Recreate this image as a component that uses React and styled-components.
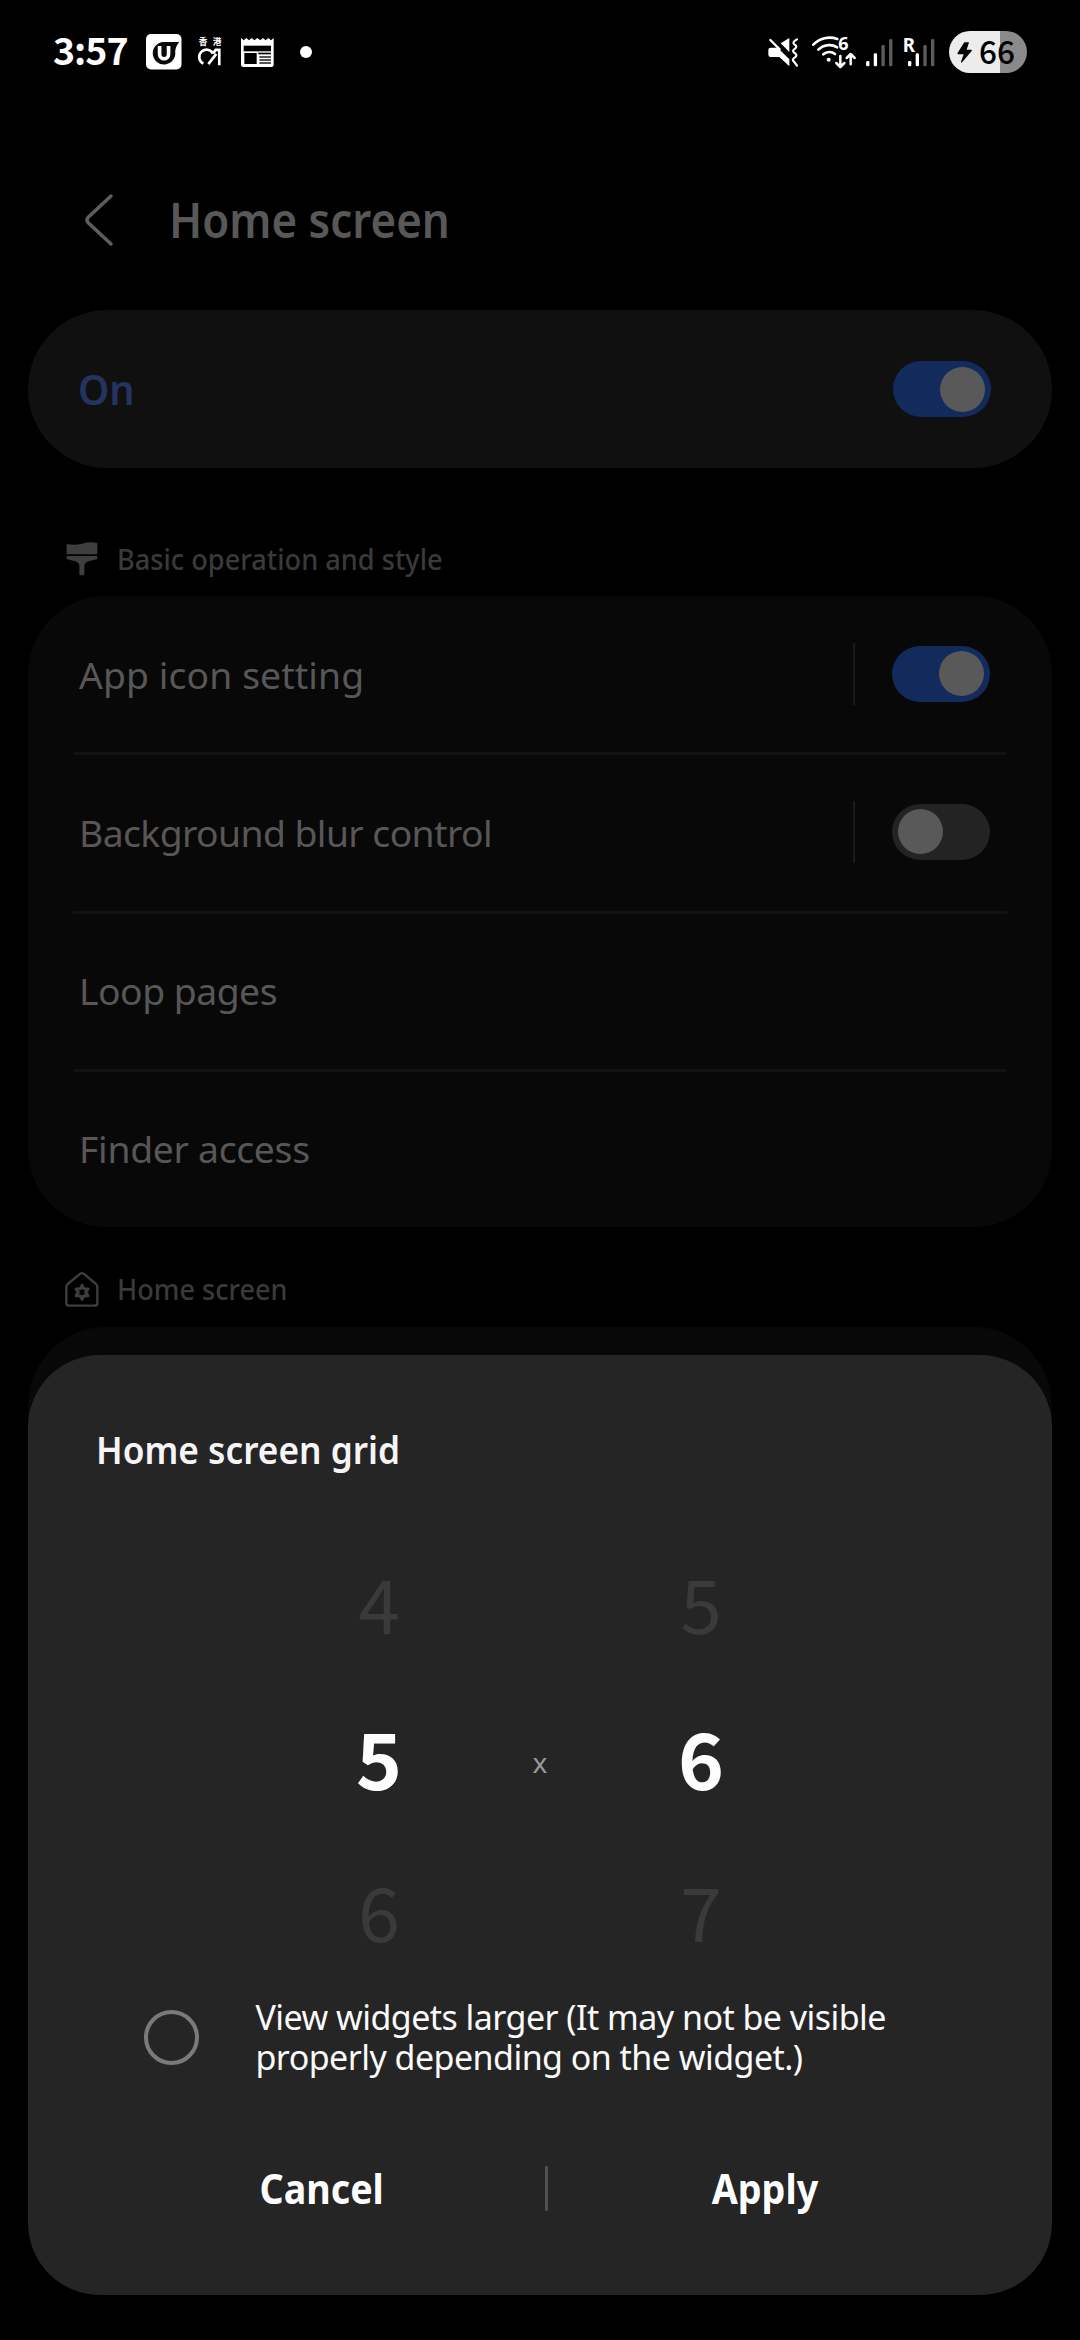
import React from "react";
import styled, { createGlobalStyle } from "styled-components";

const GlobalStyle = createGlobalStyle`
  *, *::before, *::after { box-sizing: border-box; }
  body { margin: 0; background: #000; font-family: "Noto Sans", Roboto, sans-serif; }
`;

const numerals = '"Noto Sans CJK SC", "Noto Sans", sans-serif';

/* ---------- page ---------- */

const Screen = styled.main`
  position: relative;
  display: flex;
  flex-direction: column;
  width: 1080px;
  height: 2340px;
  overflow: hidden;
  background: #000;
`;

/* Slightly condensed lettering, anchored on the side the text is aligned to. */
const Condensed = styled.span`
  display: inline-block;
  transform: scaleX(${(p) => p.$x});
  transform-origin: ${(p) => p.$from || "left"} center;
  white-space: nowrap;
`;

/* ---------- status bar ---------- */

const StatusBar = styled.header`
  display: flex;
  flex: none;
  justify-content: space-between;
  align-items: center;
  height: 104px;
  padding: 0 53px 0 53px;
`;

const StatusGroup = styled.div`
  display: flex;
  align-items: center;
`;

const Clock = styled.time`
  width: 92.5px;
  color: #fff;
  font-family: ${numerals};
  font-size: 37.5px;
  font-weight: 700;
  line-height: 56px;
  letter-spacing: -1px;
  padding-bottom: 6px;
`;

const Glyph = styled.svg`
  display: block;
  flex: none;
  overflow: visible;
  width: ${(p) => p.$w}px;
  height: ${(p) => p.$h}px;
  margin-right: ${(p) => p.$gap || 0}px;
`;

const MoreDot = styled.span`
  width: 12px;
  height: 12px;
  border-radius: 50%;
  background: #fff;
`;

const Battery = styled.div`
  display: flex;
  align-items: center;
  width: 78px;
  height: 42px;
  padding-left: 8px;
  gap: 7px;
  border-radius: 21px;
  color: #000;
  background: linear-gradient(to right, #ececec 51px, #8a8a8a 51px);
`;

const BatteryLevel = styled.span`
  padding-bottom: 4px;
  font-family: ${numerals};
  font-size: 31.5px;
  font-weight: 500;
  line-height: 38px;
`;

/* ---------- app bar ---------- */

const AppBar = styled.div`
  display: flex;
  flex: none;
  align-items: center;
  height: 206px;
  padding: 26px 0 0 85px;
`;

const PageTitle = styled.h1`
  margin: 0 0 0 55px;
  color: #585858;
  font-size: 48px;
  font-weight: 600;
  line-height: 70px;
`;

/* ---------- cards ---------- */

const MasterCard = styled.section`
  display: flex;
  flex: none;
  align-items: center;
  justify-content: space-between;
  height: 158px;
  margin: 0 28px;
  padding: 0 61px 0 50px;
  border-radius: 79px;
  background: #101010;
`;

const MasterLabel = styled.span`
  color: #24345f;
  font-size: 41px;
  font-weight: 600;
  line-height: 60px;
`;

const SectionLabel = styled.h2`
  display: flex;
  flex: none;
  align-items: center;
  height: ${(p) => p.$h}px;
  margin: 0;
  padding: ${(p) => p.$top}px 0 0 65px;
  color: #3a3a3a;
  font-size: 29px;
  font-weight: 500;
  line-height: 40px;
`;

const Card = styled.section`
  display: flex;
  flex: none;
  flex-direction: column;
  margin: 0 28px;
  padding-top: 1px;
  min-height: ${(p) => p.$min || 0}px;
  border-radius: 78px;
  background: #080808;
`;

const Row = styled.div`
  display: flex;
  align-items: center;
  justify-content: space-between;
  height: 155.25px;
  padding: 0 62px 0 51px;
`;

const RowLabel = styled.span`
  color: #575757;
  font-size: 37.3px;
  line-height: 54px;
  letter-spacing: ${(p) => p.$tracking}px;
`;

const RowRule = styled.hr`
  flex: none;
  height: 3px;
  margin: 0 45px;
  border: 0;
  background: #121212;
`;

const RowControl = styled.div`
  display: flex;
  align-items: center;
  gap: 37.5px;
  padding-bottom: 2px;
`;

const ControlRule = styled.span`
  width: 2px;
  height: 62px;
  background: #191919;
`;

const Switch = styled.span`
  display: flex;
  align-items: center;
  justify-content: ${(p) => (p.$on ? "flex-end" : "flex-start")};
  width: 98px;
  height: 56px;
  padding: 0 6px;
  border-radius: 28px;
  background: ${(p) => (p.$on ? "#132b5c" : "#232323")};
`;

const Knob = styled.span`
  width: 45px;
  height: 45px;
  border-radius: 50%;
  background: #595959;
`;

/* ---------- dialog ---------- */

const Dialog = styled.div`
  position: absolute;
  left: 28px;
  right: 28px;
  bottom: 45px;
  display: flex;
  flex-direction: column;
  height: 940px;
  padding-top: 66px;
  border-radius: 72px;
  background: #252525;
`;

const DialogTitle = styled.h2`
  margin: 0 0 51px 67.5px;
  color: #f5f5f7;
  font-size: 38.5px;
  font-weight: 600;
  line-height: 56px;
`;

const Picker = styled.div`
  display: grid;
  grid-template-columns: repeat(3, 161px);
  grid-auto-rows: 154px;
  justify-content: center;
  align-items: center;
  justify-items: center;
`;

const PickerValue = styled.span`
  padding-bottom: 6px;
  color: ${(p) => (p.$selected ? "#fdfdfd" : "#3a3a3a")};
  font-family: ${numerals};
  font-size: ${(p) => (p.$selected ? 78 : 75)}px;
  font-weight: ${(p) => (p.$selected ? 700 : 400)};
  line-height: 110px;
`;

const Times = styled.span`
  padding-top: 6px;
  color: #999;
  font-size: 28px;
  line-height: 40px;
`;

const Option = styled.label`
  display: flex;
  align-items: center;
  height: 80px;
  margin-top: 7px;
  padding-left: 115.5px;
`;

const Radio = styled.span`
  width: 55px;
  height: 55px;
  margin-right: 57px;
  border: 4px solid #7a7a7a;
  border-radius: 50%;
`;

const OptionText = styled.span`
  color: #fafafa;
  font-size: 34px;
  line-height: 40px;
  letter-spacing: -0.54px;
  white-space: nowrap;
`;

const Actions = styled.div`
  display: grid;
  grid-template-columns: 447px 3px 1fr;
  align-items: center;
  height: 60px;
  margin: 81px 70px 0;
`;

const Action = styled.button`
  padding: 0;
  border: 0;
  background: none;
  color: #fdfdfd;
  font-family: inherit;
  font-size: 41px;
  font-weight: 700;
  line-height: 60px;
`;

const ActionRule = styled.span`
  height: 45px;
  border-radius: 1px;
  background: #505050;
`;

/* ---------- drawings ---------- */

const UIcon = () => (
  <Glyph $w={35.5} $h={35.5} $gap={17} viewBox="347 73 107 107">
    <rect x="347" y="73" width="107" height="107" rx="15" fill="#fff" />
    <path d="M400 97 H447 C439 108 436 114 435 126 A34 34 0 1 1 400 97Z" fill="#0a0a0a" />
    <path d="M388 109 V134 A13.500 13.500 0 0 0 415 134 V109" fill="none" stroke="#fff" strokeWidth="11" />
  </Glyph>
);

const HkIcon = () => (
  <Glyph $w={24} $h={27.5} $gap={19} viewBox="505 86 72 83">
    <text x="507" y="108" fill="#fff" fontSize="26" fontWeight="700" fontFamily='"Noto Sans CJK TC", sans-serif'>香</text>
    <text x="549" y="108" fill="#fff" fontSize="26" fontWeight="700" fontFamily='"Noto Sans CJK TC", sans-serif'>港</text>
    <g fill="none" stroke="#fff" strokeWidth="8">
      <path d="M521 163 A22 22 0 1 1 550 133" />
      <path d="M536 165 L560 134" />
      <path d="M550 133 L558 122 H569 V168" />
    </g>
  </Glyph>
);

const NewsIcon = () => (
  <Glyph $w={32.7} $h={29} $gap={26} viewBox="633 83 98 87">
    <path d="M633 83 L641 90 L649 83 L657 90 L665 83 L673 90 L682 83 L691 90 L699 83 L707 90 L715 83 L723 90 L731 83 V163 Q731 170 724 170 H640 Q633 170 633 163Z" fill="#fff" />
    <g fill="#000">
      <rect x="641" y="106" width="82" height="17" />
      <rect x="643" y="128" width="37" height="33" />
      <rect x="685" y="127" width="38" height="5" />
      <rect x="688" y="138" width="35" height="4" />
      <rect x="688" y="147" width="35" height="4" />
      <rect x="688" y="156" width="35" height="4" />
    </g>
  </Glyph>
);

const MuteIcon = () => (
  <Glyph $w={30} $h={29} $gap={14} viewBox="83 82 90 87">
    <path d="M91 111 H112 L147 146 V167 L117 139 H91 Q84 139 84 132 V118 Q84 111 91 111Z" fill="#fff" />
    <path d="M90 88 L118 116" stroke="#fff" strokeWidth="7" strokeLinecap="round" />
    <path d="M121 98 L147 82 V124Z" fill="#fff" />
    <path d="M170 86 Q154 95 162 101 Q173 107 164 114 Q153 121 163 127 Q173 133 164 140 Q152 147 162 154 L170 165" fill="none" stroke="#fff" strokeWidth="6.500" strokeLinecap="round" />
  </Glyph>
);

const WifiIcon = () => (
  <Glyph $w={44} $h={31} $gap={10} viewBox="218 81 132 93">
    <g fill="none" stroke="#fff" strokeWidth="8" strokeLinecap="round">
      <path d="M222 104 A68 68 0 0 1 294 87" />
      <path d="M237 119 A47 47 0 0 1 294 112" />
      <path d="M252 133 A27 27 0 0 1 287 132" />
    </g>
    <circle cx="268" cy="149" r="6" fill="#fff" />
    <text x="297" y="121" fontSize="54" fontWeight="700" fontFamily='"Noto Sans", sans-serif' fill="#fff" stroke="#000" strokeWidth="6" paintOrder="stroke">6</text>
    <g fill="none" stroke="#fff" strokeWidth="7.500" strokeLinecap="round" strokeLinejoin="round">
      <path d="M303 138 V170 M291 159 L303 171 L315 159" />
      <path d="M334 163 V132 M322 144 L334 132 L346 144" />
    </g>
  </Glyph>
);

const bars = [
  [0, 66, 16, "#fff"],
  [23, 43, 39, "#fff"],
  [46, 18, 64, "#5c5c5c"],
  [69, 0, 82, "#5c5c5c"],
];

const SignalIcon = ({ roaming }) => (
  <Glyph $w={roaming ? 30 : 26.500} $h={29} $gap={roaming ? 15 : 11.500} viewBox={roaming ? "-12 -3 90 87" : "0 -3 79 87"}>
    {bars.map(([x, y, h, fill]) => (
      <rect key={x} x={x} y={y} width="10" height={h} rx="4" fill={fill} />
    ))}
    {roaming && (
      <text x="-16" y="38" fontSize="56" fontWeight="700" fontFamily='"Noto Sans", sans-serif' fill="#fff" stroke="#000" strokeWidth="5" paintOrder="stroke">R</text>
    )}
  </Glyph>
);

const BoltIcon = () => (
  <Glyph $w={15} $h={21} viewBox="651 95 45 63">
    <path d="M673 96 H687 L680 118 H694 Q697 119 695 122 L667 155 Q662 159 663 154 L671 132 H655 Q651 131 653 127Z" fill="#000" />
  </Glyph>
);

const BackIcon = () => (
  <Glyph $w={29} $h={52} viewBox="0 0 29 52">
    <path d="M26 2 L3 23.500 Q1 26 3 28.500 L26 50" fill="none" stroke="#5e5e5e" strokeWidth="3.5" strokeLinecap="round" />
  </Glyph>
);

const BrushIcon = () => (
  <Glyph $w={34} $h={34} $gap={18} viewBox="134 65 102 102">
    <g fill="#3e3e3e">
      <path d="M139 71 Q162 76 185 70 Q208 63 231 68 V102 H139Z" />
      <path d="M139 107 H231 V116 Q222 119 208 122 Q193 126 192 135 V160 Q192 165 187 165 H182 Q177 165 177 160 V135 Q176 126 162 122 Q148 119 139 116Z" />
    </g>
  </Glyph>
);

const HomeIcon = () => (
  <Glyph $w={34} $h={35} $gap={18} viewBox="134 91 102 105">
    <g fill="none" stroke="#3e3e3e" strokeWidth="7" strokeLinejoin="round">
      <path d="M180 96 Q185 93 190 96 L227 127 Q231 131 231 136 V183 Q231 192 222 192 H147 Q138 192 138 183 V136 Q138 131 142 127Z" />
      <path d="M185 131 L190 141 L203 142 L196 152 L203 162 L190 163 L185 173 L180 163 L167 162 L174 152 L167 142 L180 141Z" strokeWidth="9" />
    </g>
  </Glyph>
);

/* ---------- data ---------- */

const rows = [
  { label: "App icon setting", tracking: 0.1, toggle: "on" },
  { label: "Background blur control", tracking: -0.58, toggle: "off" },
  { label: "Loop pages", tracking: -0.5 },
  { label: "Finder access", tracking: -0.3 },
];

const grid = [
  [4, 5],
  [5, 6],
  [6, 7],
];

const Toggle = ({ on }) => (
  <Switch $on={on}>
    <Knob />
  </Switch>
);

export default function App() {
  return (
    <Screen>
      <GlobalStyle />
      <StatusBar>
        <StatusGroup>
          <Clock>3:57</Clock>
          <UIcon />
          <HkIcon />
          <NewsIcon />
          <MoreDot />
        </StatusGroup>
        <StatusGroup>
          <MuteIcon />
          <WifiIcon />
          <SignalIcon />
          <SignalIcon roaming />
          <Battery>
            <BoltIcon />
            <BatteryLevel>66</BatteryLevel>
          </Battery>
        </StatusGroup>
      </StatusBar>

      <AppBar>
        <BackIcon />
        <PageTitle>
          <Condensed $x={0.915}>Home screen</Condensed>
        </PageTitle>
      </AppBar>

      <MasterCard>
        <MasterLabel>
          <Condensed $x={0.97}>On</Condensed>
        </MasterLabel>
        <Toggle on />
      </MasterCard>

      <SectionLabel $h={128} $top={53}>
        <BrushIcon />
        <Condensed $x={0.937}>Basic operation and style</Condensed>
      </SectionLabel>
      <Card>
        {rows.map((row, i) => (
          <React.Fragment key={row.label}>
            {i > 0 && <RowRule />}
            <Row>
              <RowLabel $tracking={row.tracking}>{row.label}</RowLabel>
              {row.toggle && (
                <RowControl>
                  <ControlRule />
                  <Toggle on={row.toggle === "on"} />
                </RowControl>
              )}
            </Row>
          </React.Fragment>
        ))}
      </Card>

      <SectionLabel $h={100} $top={24}>
        <HomeIcon />
        <Condensed $x={0.934}>Home screen</Condensed>
      </SectionLabel>
      <Card $min={400} />

      <Dialog role="dialog">
        <DialogTitle>
          <Condensed $x={0.916}>Home screen grid</Condensed>
        </DialogTitle>
        <Picker>
          {grid.map(([columns, lines], i) => (
            <React.Fragment key={columns}>
              <PickerValue $selected={i === 1}>{columns}</PickerValue>
              {i === 1 ? <Times>x</Times> : <span />}
              <PickerValue $selected={i === 1}>{lines}</PickerValue>
            </React.Fragment>
          ))}
        </Picker>
        <Option>
          <Radio />
          <OptionText>
            View widgets larger (It may not be visible
            <br />
            properly depending on the widget.)
          </OptionText>
        </Option>
        <Actions>
          <Action>
            <Condensed $x={0.918} $from="center">Cancel</Condensed>
          </Action>
          <ActionRule />
          <Action>
            <Condensed $x={0.92} $from="center">Apply</Condensed>
          </Action>
        </Actions>
      </Dialog>
    </Screen>
  );
}
